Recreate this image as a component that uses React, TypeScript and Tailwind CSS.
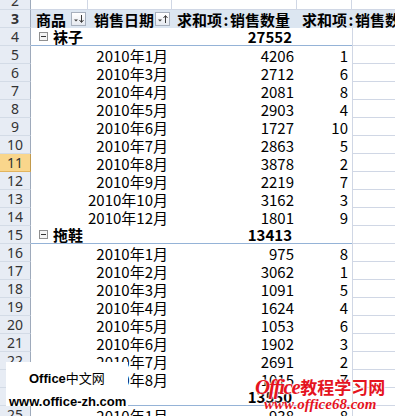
import React from 'react';

type Item = { kind: 'item'; date: string; qty: string; n: string };
type Group = { kind: 'group'; name: string; total: string };
type Row = Item | Group;

const it = (date: string, qty: string, n: string): Item => ({ kind: 'item', date, qty, n });
const gr = (name: string, total: string): Group => ({ kind: 'group', name, total });

const body: Row[] = [
  gr('袜子', '27552'),
  it('2010年1月', '4206', '1'),
  it('2010年3月', '2712', '6'),
  it('2010年4月', '2081', '8'),
  it('2010年5月', '2903', '4'),
  it('2010年6月', '1727', '10'),
  it('2010年7月', '2863', '5'),
  it('2010年8月', '3878', '2'),
  it('2010年9月', '2219', '7'),
  it('2010年10月', '3162', '3'),
  it('2010年12月', '1801', '9'),
  gr('拖鞋', '13413'),
  it('2010年1月', '975', '8'),
  it('2010年2月', '3062', '1'),
  it('2010年3月', '1091', '5'),
  it('2010年4月', '1624', '4'),
  it('2010年5月', '1053', '6'),
  it('2010年6月', '1902', '3'),
  it('2010年7月', '2691', '2'),
  it('2010年8月', '1015', '7'),
  gr('凉鞋', '13550'),
  it('2010年1月', '938', '8'),
];

function RowHead({ n }: { n: number }) {
  const sel = n === 11;
  return (
    <div
      className={
        sel
          ? 'w-[31px] shrink-0 h-full flex items-center justify-center border-r border-b border-r-[#c29a4c] border-b-[#e2b45e] bg-[#f9d68c] text-[#333] text-[14px] font-["Noto_Sans",sans-serif]'
          : 'w-[31px] shrink-0 h-full flex items-center justify-center border-r border-b border-r-[#9eaabb] border-b-[#d3dbe6] bg-[#e7ecf4] text-[#333] text-[14px] font-["Noto_Sans",sans-serif]'
      }
    >
      {n}
    </div>
  );
}

function SortBtn({ up }: { up: boolean }) {
  return (
    <div className="w-[15px] h-[14px] shrink-0 border border-[#a7b0bd] bg-gradient-to-b from-white to-[#e6eaf0] flex items-center justify-center">
      <svg width="13" height="12" viewBox="0 0 13 12">
        <path d="M2 6.5 L6 6.5 L4 8.5 Z" fill="#3b3b3b" />
        {up ? (
          <>
            <path d="M9.5 3 L9.5 10" stroke="#3b3b3b" strokeWidth="1" />
            <path d="M7.5 5 L9.5 2.5 L11.5 5" stroke="#3b3b3b" strokeWidth="1" fill="none" />
          </>
        ) : (
          <>
            <path d="M9.5 2 L9.5 9" stroke="#3b3b3b" strokeWidth="1" />
            <path d="M7.5 7 L9.5 9.5 L11.5 7" stroke="#3b3b3b" strokeWidth="1" fill="none" />
          </>
        )}
      </svg>
    </div>
  );
}

function MinusBox() {
  return (
    <svg width="9" height="9" viewBox="0 0 9 9" className="shrink-0">
      <rect x="0.5" y="0.5" width="8" height="8" fill="#f4f4f4" stroke="#8f8f8f" />
      <path d="M2 4.5 L7 4.5" stroke="#333" strokeWidth="1" />
    </svg>
  );
}

function Colon() {
  return <span className="inline-block w-[8px] text-center">:</span>;
}

export default function App() {
  return (
    <div className="relative w-[395px] h-[416px] overflow-hidden bg-white text-black text-[15px] leading-none font-['Noto_Sans_CJK_SC',sans-serif]">
      <div className="flex flex-col -mt-[8px]">
        {/* row 2 */}
        <div className="flex h-[18px]">
          <RowHead n={2} />
          <div className="w-[57px] shrink-0 border-r border-b border-[#d0d7e5]" />
          <div className="w-[84px] shrink-0 border-r border-b border-[#d0d7e5]" />
          <div className="w-[125px] shrink-0 border-r border-b border-[#d0d7e5]" />
          <div className="w-[55px] shrink-0 border-r border-b border-[#d0d7e5]" />
          <div className="flex-1 border-b border-[#d0d7e5]" />
        </div>
        {/* row 3 header */}
        <div className="flex h-[18px] bg-[#dce6f1] font-bold whitespace-nowrap">
          <RowHead n={3} />
          <div className="w-[57px] shrink-0 flex items-center justify-between pl-[5px] pr-[2px]">
            <span>商品</span>
            <SortBtn up={false} />
          </div>
          <div className="w-[84px] shrink-0 flex items-center justify-between pl-[6px] pr-[2px]">
            <span>销售日期</span>
            <SortBtn up={true} />
          </div>
          <div className="w-[125px] shrink-0 flex items-center pl-[5px]">
            <span>
              求和项<Colon />销售数量
            </span>
          </div>
          <div className="w-[55px] shrink-0 flex items-center pl-[5px] overflow-visible">
            <span>
              求和项<Colon />销售数量
            </span>
          </div>
          <div className="flex-1" />
        </div>
        {body.map((r, i) => {
          const n = i + 4;
          if (r.kind === 'group') {
            return (
              <div key={n} className="flex h-[18px]">
                <RowHead n={n} />
                <div className="flex w-[321px] shrink-0 border-b border-[#95b3d7] font-bold">
                  <div className="w-[57px] shrink-0 flex items-center pl-[8px] gap-[5px]">
                    <MinusBox />
                    <span>{r.name}</span>
                  </div>
                  <div className="w-[84px] shrink-0" />
                  <div className="w-[125px] shrink-0 flex items-center justify-end pr-[5px]">{r.total}</div>
                  <div className="w-[55px] shrink-0" />
                </div>
                <div className="flex-1 border-l border-b border-[#d0d7e5]" />
              </div>
            );
          }
          return (
            <div key={n} className="flex h-[18px]">
              <RowHead n={n} />
              <div className="flex w-[321px] shrink-0">
                <div className="w-[57px] shrink-0" />
                <div className="w-[84px] shrink-0 flex items-center justify-end pr-[4px] whitespace-nowrap">{r.date}</div>
                <div className="w-[125px] shrink-0 flex items-center justify-end pr-[3px]">{r.qty}</div>
                <div className="w-[55px] shrink-0 flex items-center justify-end pr-[4px]">{r.n}</div>
              </div>
              <div className="flex-1 border-l border-b border-[#d0d7e5]" />
            </div>
          );
        })}
      </div>

      {/* watermark left */}
      <div className="absolute left-[6px] top-[362px] w-[122px] h-[44px] bg-white">
        <div className="absolute left-[23px] top-[9px] flex items-baseline text-[13px] leading-none whitespace-nowrap">
          <span className="font-bold font-['Liberation_Sans',sans-serif]">Office</span>
          <span className="font-['Noto_Sans_CJK_SC',sans-serif]">中文网</span>
        </div>
        <div className="absolute left-[3px] top-[33px] text-[13px] leading-none font-bold font-['Liberation_Sans',sans-serif] whitespace-nowrap">
          www.office-zh.com
        </div>
      </div>

      {/* watermark right */}
      <div className="absolute left-[255px] top-[377px] text-[#e5141e] whitespace-nowrap [text-shadow:0_0_2px_#fff,0_0_2px_#fff,0_0_1px_#fff]">
        <div className="flex items-baseline leading-none">
          <span className="font-['Liberation_Serif',serif] italic font-bold text-[21px] tracking-[-1.5px]">Office</span>
          <span className="font-['Noto_Sans_CJK_SC',sans-serif] font-bold text-[17px] ml-[1px]">教程学习网</span>
        </div>
        <div className="ml-[9px] -mt-[1px] font-['Liberation_Serif',serif] italic font-bold text-[15px] leading-none">
          www.office68.com
        </div>
      </div>
    </div>
  );
}
